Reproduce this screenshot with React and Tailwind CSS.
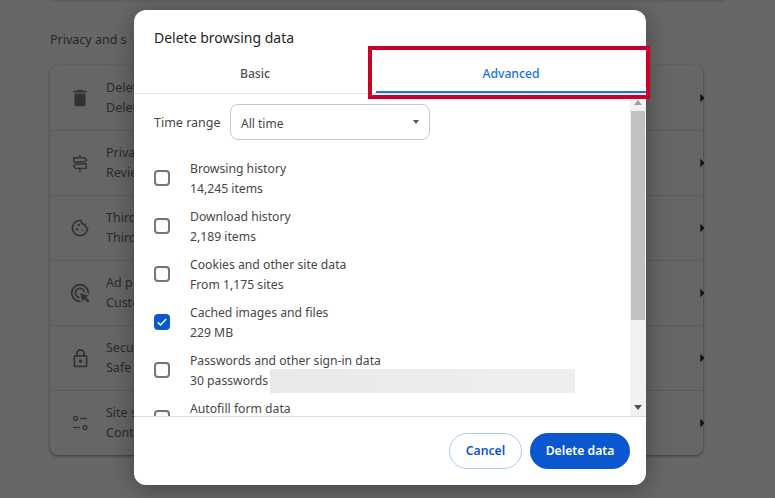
import { MdDelete, MdOutlineCookie, MdOutlineAdsClick, MdOutlineLock, MdArrowRight } from 'react-icons/md';

const FONT = 'font-["Noto_Sans",sans-serif]';

const SignpostIcon = () => (
  <svg viewBox="0 0 20 20" className="w-5 h-5" fill="none" stroke="currentColor" strokeWidth="1.4">
    <path d="M10 2v2M10 9.5v1.5M10 16v3" />
    <path d="M3.7 4.7h10.6l2.2 2.2-2.2 2.1H3.7z" />
    <path d="M16.3 11H5.7l-2.2 2.2 2.2 2.2h10.6z" />
  </svg>
);

const SlidersIcon = () => (
  <svg viewBox="0 0 20 20" className="w-5 h-5" fill="none" stroke="currentColor" strokeWidth="1.3">
    <circle cx="5.5" cy="5.5" r="2" />
    <path d="M10 5.5h7" />
    <path d="M3 14.5h7" />
    <circle cx="15" cy="14.5" r="2" />
  </svg>
);

// only the part of each row that shows to the left of the dialog
const settingsRows = [
  { icon: <MdDelete size={22} />, title: 'Delet', sub: 'Delet' },
  { icon: <SignpostIcon />, title: 'Priva', sub: 'Revie' },
  { icon: <MdOutlineCookie size={20} />, title: 'Third', sub: 'Third' },
  { icon: <MdOutlineAdsClick size={22} />, title: 'Ad p', sub: 'Custo' },
  { icon: <MdOutlineLock size={21} />, title: 'Secu', sub: 'Safe' },
  { icon: <SlidersIcon />, title: 'Site s', sub: 'Cont' },
];

const dataRows = [
  { title: 'Browsing history', sub: '14,245 items' },
  { title: 'Download history', sub: '2,189 items' },
  { title: 'Cookies and other site data', sub: 'From 1,175 sites' },
  { title: 'Cached images and files', sub: '229 MB', checked: true },
  { title: 'Passwords and other sign-in data', sub: '30 passwords', blurred: true },
  { title: 'Autofill form data', sub: '' },
];

function Checkbox({ checked }) {
  if (checked) {
    return (
      <div className="w-4 h-4 rounded-sm bg-[#0b57d0] flex items-center justify-center shrink-0">
        <svg viewBox="0 0 16 16" className="w-3 h-3" fill="none" stroke="white" strokeWidth="2">
          <path d="M2.5 8.5l3.5 3.5 7.5-8" />
        </svg>
      </div>
    );
  }
  return <div className="w-4 h-4 rounded-sm border-2 border-[#757575] shrink-0" />;
}

export default function App() {
  return (
    <div className={`relative w-[775px] h-[498px] overflow-hidden bg-[#676767] ${FONT}`}>
      <div className="h-[2px] mx-[50px] bg-[#5f5f5f]" />
      <div className="pl-[50px] pr-[72px] pt-[28px]">
        <div className="whitespace-nowrap text-[12.5px] leading-5 text-[#262626]">Privacy and s</div>
        <div className="mt-[15px] rounded-lg shadow-[0_1px_3px_rgba(0,0,0,0.45)] bg-[#666666]">
          {settingsRows.map((row, i) => (
            <div
              key={i}
              className={`h-[65px] flex items-center pl-[18px] text-[#2b2b2b] ${i ? 'border-t border-[#5c5c5c]' : ''}`}
            >
              <div className="w-6 flex justify-center text-[#333333]">{row.icon}</div>
              <div className="ml-[14px] text-[12.5px] leading-5 whitespace-nowrap">
                <div>{row.title}</div>
                <div>{row.sub}</div>
              </div>
              <div className="flex-1" />
              <div className="mr-[-9px] text-[#111111] w-[20px] flex justify-center">
                <MdArrowRight size={20} />
              </div>
            </div>
          ))}
        </div>
      </div>

      <div className="absolute left-[134px] top-[10px] w-[512px] h-[475px] bg-white rounded-xl shadow-[0_4px_24px_rgba(0,0,0,0.35)] flex flex-col overflow-hidden">
        <div className="pl-[20px] pt-[18px] h-[40px] text-[14px] leading-5 text-[#1f1f1f]">Delete browsing data</div>
        <div className="flex h-[44px] border-b border-[#e0e0e0] text-[12.2px] font-medium">
          <div className="flex-1 flex items-center justify-center pt-[6px] text-[#555555]">Basic</div>
          <div className="w-[270px] flex items-center justify-center pt-[7px] text-[#1a73e8] border-b-2 border-[#1a73e8]">Advanced</div>
        </div>
        <div className="flex flex-1 min-h-0">
          <div className="flex-1 overflow-hidden pl-[20px]">
            <div className="flex items-center mt-[10px] h-[36px]">
              <div className="w-[76px] text-[12.5px] text-[#474747] pt-[2px]">Time range</div>
              <div className="w-[200px] h-[36px] rounded-lg border border-[#c7c7c7] flex items-center justify-between pl-[10px] pr-[10px] text-[12px] text-[#474747]">
                <span className="pt-[3px]">All time</span>
                <div className="w-0 h-0 border-x-[3.5px] border-x-transparent border-t-[4px] border-t-[#555555]" />
              </div>
            </div>
            <div className="mt-[18px] flex flex-col gap-[8px]">
              {dataRows.map((row) => (
                <div key={row.title} className="h-[40px] flex items-center">
                  <Checkbox checked={row.checked} />
                  <div className="ml-[20px] pt-[2px] text-[12.2px] leading-5 text-[#474747] whitespace-nowrap">
                    <div>{row.title}</div>
                    <div className="flex items-center h-5">
                      {row.sub}
                      {row.blurred && <div className="ml-[2px] w-[305px] h-[24px] bg-gradient-to-r from-[#e9e9e9] to-[#efefef]" />}
                    </div>
                  </div>
                </div>
              ))}
            </div>
          </div>
          <div className="w-[16px] bg-[#f1f1f1] flex flex-col items-center shrink-0">
            <div className="h-[17px] flex items-center justify-center shrink-0">
              <div className="w-0 h-0 border-x-[4px] border-x-transparent border-b-[5px] border-b-[#a3a3a3]" />
            </div>
            <div className="w-[14px] h-[209px] bg-[#c1c1c1]" />
            <div className="flex-1" />
            <div className="h-[17px] flex items-center justify-center shrink-0">
              <div className="w-0 h-0 border-x-[4px] border-x-transparent border-t-[5px] border-t-[#505050]" />
            </div>
          </div>
        </div>
        <div className="h-[69px] border-t border-[#dadada] flex items-center justify-end gap-[8px] pr-[16px] text-[12.2px] font-semibold shrink-0">
          <div className="w-[73px] h-[36px] rounded-full border border-[#a8c7fa] text-[#0b57d0] flex items-center justify-center pt-[1px]">Cancel</div>
          <div className="w-[100px] h-[36px] rounded-full bg-[#0b57d0] text-white flex items-center justify-center pt-[1px]">Delete data</div>
        </div>
      </div>

      <div className="absolute left-[368px] top-[46px] w-[282px] h-[53px] border-4 border-[#c8002a]" />
    </div>
  );
}
